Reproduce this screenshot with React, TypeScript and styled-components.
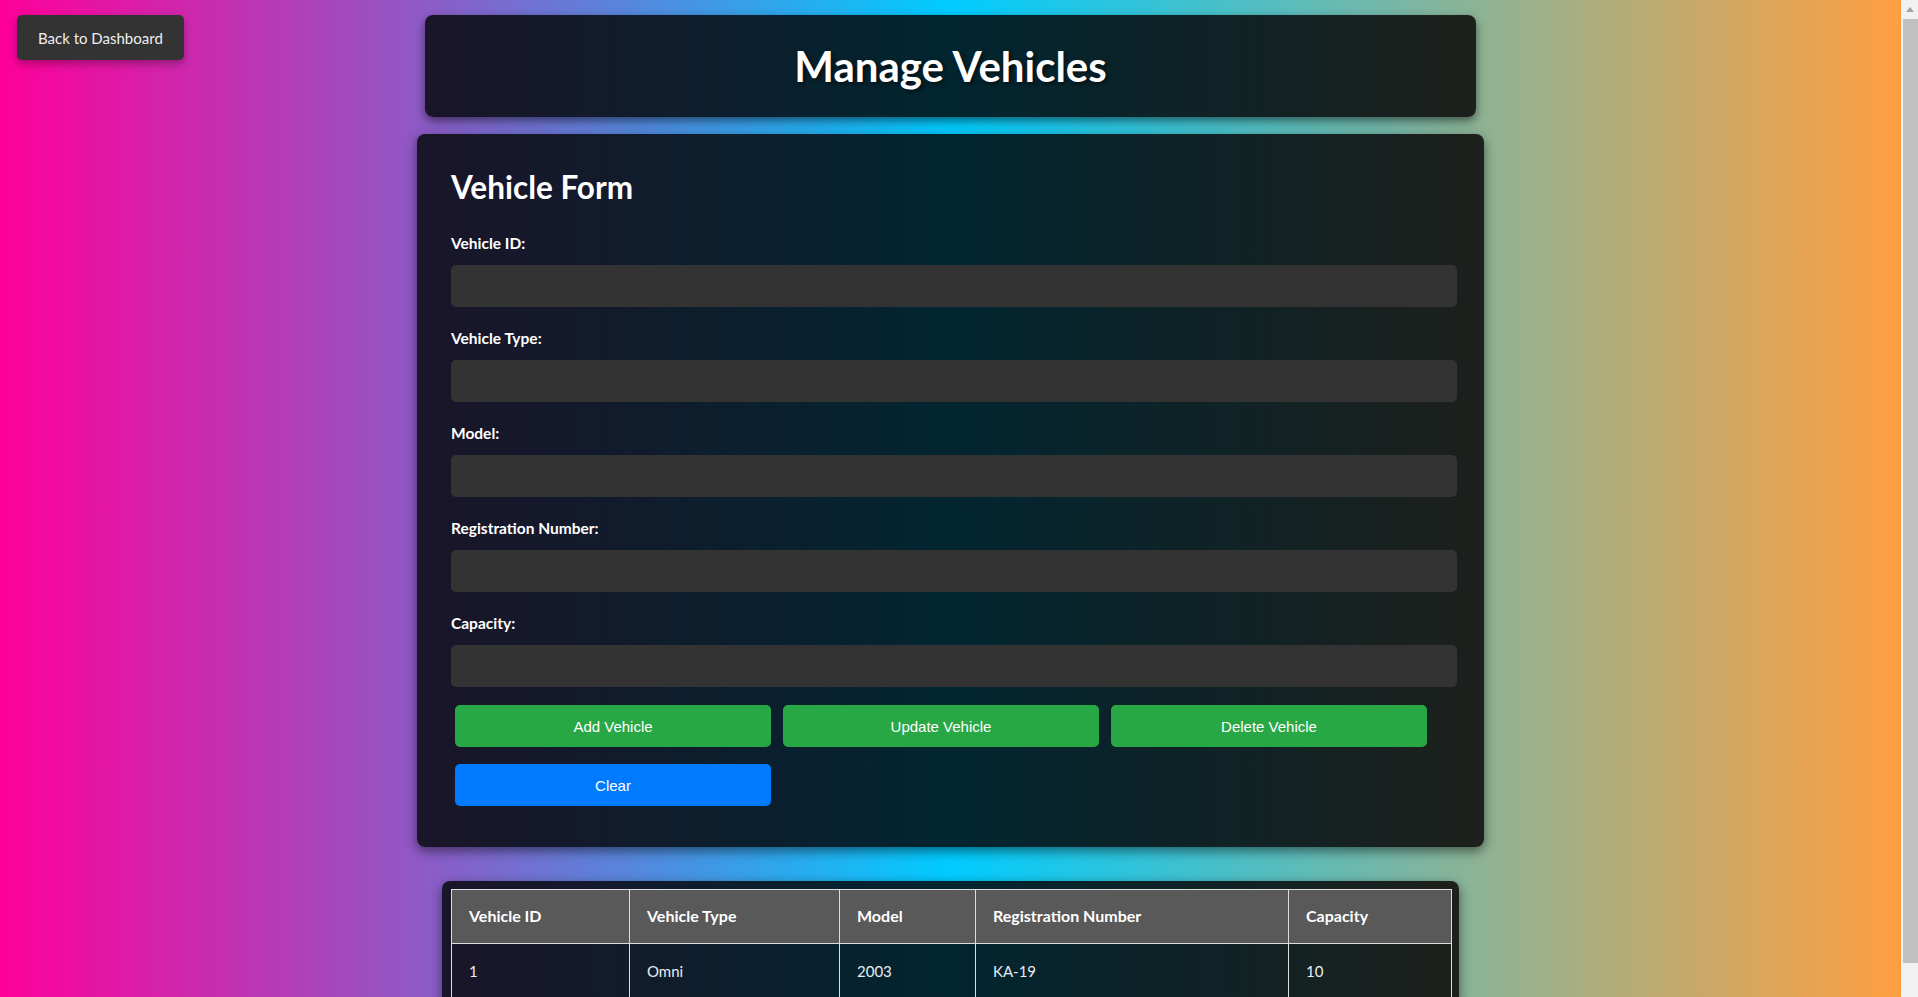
import React from "react";
import styled, { createGlobalStyle } from "styled-components";

const GlobalStyle = createGlobalStyle`
  html, body {
    margin: 0;
    padding: 0;
  }
  body {
    background: #f1f1f1;
    font-family: "Lato", "Open Sans", sans-serif;
    color: #ffffff;
  }
  * { box-sizing: border-box; }
`;

const cardGradient = "linear-gradient(to right, #1a1529, #022530, #1d201c)";

const Page = styled.div`
  position: relative;
  width: calc(100% - 17px);
  min-height: 100vh;
  display: flex;
  flex-direction: column;
  align-items: center;
  padding: 15px 0 40px;
  background: linear-gradient(to right, #ff0099, #00ccff, #ff9f40);
`;

const ScrollTrack = styled.div`
  position: fixed;
  top: 0;
  right: 0;
  width: 17px;
  height: 100vh;
  display: flex;
  flex-direction: column;
  background: #f1f1f1;
`;

const ScrollArrow = styled.div`
  height: 19px;
  display: flex;
  align-items: center;
  justify-content: center;
  &::before {
    content: "";
    width: 0;
    height: 0;
    border-left: 4.5px solid transparent;
    border-right: 4.5px solid transparent;
    border-bottom: 5px solid #a3a3a3;
  }
`;

const ScrollThumb = styled.div`
  margin-left: 2px;
  height: 944px;
  background: #c1c1c1;
`;

const BackButton = styled.button`
  position: absolute;
  top: 15px;
  left: 17px;
  height: 45px;
  padding: 0 21px;
  border: none;
  border-radius: 5px;
  background: #333333;
  color: #eeeeee;
  font-family: "Lato", "Open Sans", sans-serif;
  font-size: 15px;
  box-shadow: 0 4px 8px rgba(0, 0, 0, 0.3);
  cursor: pointer;
`;

const HeaderCard = styled.header`
  width: 1051px;
  height: 102px;
  display: flex;
  align-items: center;
  justify-content: center;
  border-radius: 8px;
  background: ${cardGradient};
  box-shadow: 0 4px 10px rgba(0, 0, 0, 0.5);
`;

const Title = styled.h1`
  margin: 0;
  font-size: 42px;
  line-height: 50px;
  font-weight: 700;
  color: #ffffff;
  text-shadow: 2px 2px 4px rgba(0, 0, 0, 0.6);
`;

const FormCard = styled.section`
  width: 1067px;
  margin-top: 17px;
  padding: 35px 27px 41px 34px;
  border-radius: 8px;
  background: ${cardGradient};
  box-shadow: 0 4px 12px rgba(0, 0, 0, 0.5);
`;

const FormTitle = styled.h2`
  margin: 0;
  font-size: 31.5px;
  line-height: 37px;
  font-weight: 700;
  color: #ffffff;
`;

const Fields = styled.div`
  display: flex;
  flex-direction: column;
  gap: 21px;
  margin-top: 27px;
`;

const Field = styled.div`
  display: flex;
  flex-direction: column;
  gap: 12px;
`;

const Label = styled.label`
  font-size: 15.5px;
  line-height: 20px;
  font-weight: 700;
  color: #ffffff;
`;

const Input = styled.input`
  width: 100%;
  height: 42px;
  padding: 0 10px;
  border: none;
  border-radius: 5px;
  background: #333333;
  color: #ffffff;
  font-size: 16px;
  outline: none;
`;

const ButtonRow = styled.div`
  display: flex;
  flex-wrap: wrap;
  gap: 17px 12px;
  margin-top: 18px;
  padding-left: 4px;
`;

const ActionButton = styled.button<{ $variant: "green" | "blue" }>`
  width: 316px;
  height: 42px;
  border: none;
  border-radius: 5px;
  background: ${(p) => (p.$variant === "green" ? "#28a745" : "#007bff")};
  color: #ffffff;
  font-family: "Liberation Sans", Arial, sans-serif;
  font-size: 15px;
  cursor: pointer;
`;

const TableCard = styled.section`
  width: 1017px;
  margin-top: 34px;
  padding: 8px 8px 8px 9px;
  border-radius: 8px;
  background: ${cardGradient};
  box-shadow: 0 4px 12px rgba(0, 0, 0, 0.5);
`;

const Table = styled.table`
  width: 1000px;
  table-layout: fixed;
  border-collapse: collapse;
`;

const Th = styled.th`
  padding: 16px 17px 17px;
  line-height: 20px;
  border: 1px solid #dddddd;
  background: #595959;
  color: #ffffff;
  font-size: 16px;
  font-weight: 700;
  text-align: left;
`;

const Td = styled.td`
  padding: 17px 17px 16px;
  line-height: 20px;
  border: 1px solid #dddddd;
  color: #e6eef2;
  font-size: 15px;
  text-align: left;
`;

const columns = [
  { label: "Vehicle ID", width: 178 },
  { label: "Vehicle Type", width: 210 },
  { label: "Model", width: 136 },
  { label: "Registration Number", width: 313 },
  { label: "Capacity", width: 163 },
];

const rows = [["1", "Omni", "2003", "KA-19", "10"]];

const fields = [
  "Vehicle ID:",
  "Vehicle Type:",
  "Model:",
  "Registration Number:",
  "Capacity:",
];

export default function App() {
  return (
    <>
      <GlobalStyle />
      <Page>
        <BackButton>Back to Dashboard</BackButton>
        <HeaderCard>
          <Title>Manage Vehicles</Title>
        </HeaderCard>
        <FormCard>
          <FormTitle>Vehicle Form</FormTitle>
          <Fields>
            {fields.map((f) => (
              <Field key={f}>
                <Label>{f}</Label>
                <Input type="text" />
              </Field>
            ))}
          </Fields>
          <ButtonRow>
            <ActionButton $variant="green">Add Vehicle</ActionButton>
            <ActionButton $variant="green">Update Vehicle</ActionButton>
            <ActionButton $variant="green">Delete Vehicle</ActionButton>
            <ActionButton $variant="blue">Clear</ActionButton>
          </ButtonRow>
        </FormCard>
        <TableCard>
          <Table>
            <colgroup>
              {columns.map((c) => (
                <col key={c.label} style={{ width: c.width }} />
              ))}
            </colgroup>
            <thead>
              <tr>
                {columns.map((c) => (
                  <Th key={c.label}>{c.label}</Th>
                ))}
              </tr>
            </thead>
            <tbody>
              {rows.map((r, i) => (
                <tr key={i}>
                  {r.map((cell, j) => (
                    <Td key={j}>{cell}</Td>
                  ))}
                </tr>
              ))}
            </tbody>
          </Table>
        </TableCard>
      </Page>
      <ScrollTrack aria-hidden>
        <ScrollArrow />
        <ScrollThumb />
      </ScrollTrack>
    </>
  );
}
